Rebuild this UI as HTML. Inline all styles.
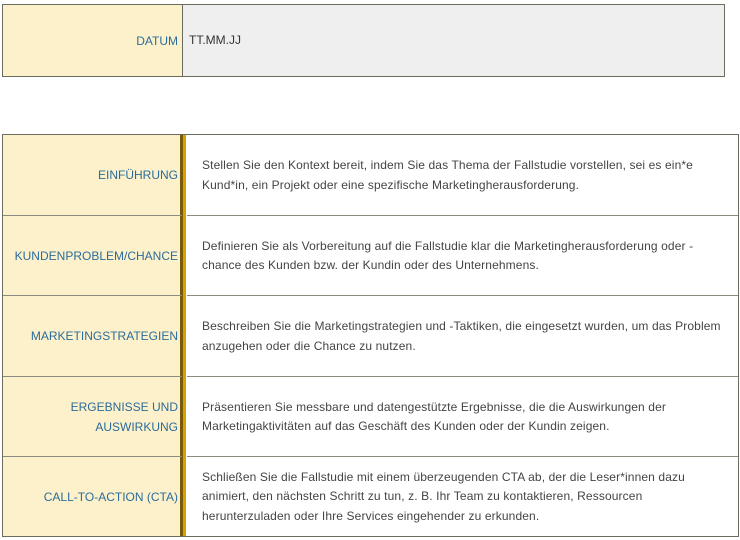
<!DOCTYPE html>
<html><head><meta charset="utf-8"><style>
body{margin:0;width:740px;height:540px;background:#fff;font-family:"Liberation Sans",sans-serif;font-size:12px;position:relative;overflow:hidden}
.box{position:absolute;border:1px solid #6b6b5e;box-sizing:border-box}
.lab{position:absolute;background:#fdf1cc;color:#2c6c99;text-align:right;display:flex;align-items:center;justify-content:flex-end;box-sizing:border-box;line-height:20px}
.txt{position:absolute;color:#444;line-height:19.5px;display:flex;align-items:center;box-sizing:border-box;letter-spacing:0.12px;padding-top:1px}
.hl{position:absolute;left:184px;right:0;height:1px;background:#8a8a80}
.hl2{position:absolute;left:0;width:179px;height:1px;background:#8a8a80}
</style></head><body>
<div class="box" style="left:2px;top:4px;width:723px;height:73px;background:#efefef">
 <div class="lab" style="left:0;top:0;width:180px;height:71px;padding-right:4px;border-right:1px solid #6b6b5e">DATUM</div>
 <div class="txt" style="left:186px;top:0;height:71px;color:#333;letter-spacing:0">TT.MM.JJ</div>
</div>
<div class="box" style="left:2px;top:134px;width:737px;height:403px">
 <div style="position:absolute;left:0;top:0;width:177px;height:401px;background:#fdf1cc"></div>
 <div style="position:absolute;left:177px;top:0;width:3px;height:401px;background:#7a5a0a"></div>
 <div style="position:absolute;left:180px;top:0;width:3px;height:401px;background:#d6a300"></div>
 <div class="hl" style="top:80px"></div><div class="hl2" style="top:80px"></div>
 <div class="hl" style="top:160px"></div><div class="hl2" style="top:160px"></div>
 <div class="hl" style="top:241px"></div><div class="hl2" style="top:241px"></div>
 <div class="hl" style="top:321px"></div><div class="hl2" style="top:321px"></div>

 <div class="lab" style="left:0;top:0;width:175px;height:80px;background:none">EINFÜHRUNG</div>
 <div class="lab" style="left:0;top:81px;width:175px;height:79px;background:none">KUNDENPROBLEM/CHANCE</div>
 <div class="lab" style="left:0;top:161px;width:175px;height:80px;background:none">MARKETINGSTRATEGIEN</div>
 <div class="lab" style="left:0;top:242px;width:175px;height:79px;background:none">ERGEBNISSE UND<br>AUSWIRKUNG</div>
 <div class="lab" style="left:0;top:322px;width:175px;height:79px;background:none">CALL-TO-ACTION (CTA)</div>

 <div class="txt" style="left:199px;top:0;width:500px;height:80px">Stellen Sie den Kontext bereit, indem Sie das Thema der Fallstudie vorstellen, sei es ein*e<br>Kund*in, ein Projekt oder eine spezifische Marketingherausforderung.</div>
 <div class="txt" style="left:199px;top:81px;width:520px;height:79px">Definieren Sie als Vorbereitung auf die Fallstudie klar die Marketingherausforderung oder -<br>chance des Kunden bzw. der Kundin oder des Unternehmens.</div>
 <div class="txt" style="left:199px;top:161px;width:535px;height:80px">Beschreiben Sie die Marketingstrategien und -Taktiken, die eingesetzt wurden, um das Problem<br>anzugehen oder die Chance zu nutzen.</div>
 <div class="txt" style="left:199px;top:242px;width:530px;height:79px">Präsentieren Sie messbare und datengestützte Ergebnisse, die die Auswirkungen der<br>Marketingaktivitäten auf das Geschäft des Kunden oder der Kundin zeigen.</div>
 <div class="txt" style="left:199px;top:322px;width:535px;height:79px">Schließen Sie die Fallstudie mit einem überzeugenden CTA ab, der die Leser*innen dazu<br>animiert, den nächsten Schritt zu tun, z. B. Ihr Team zu kontaktieren, Ressourcen<br>herunterzuladen oder Ihre Services eingehender zu erkunden.</div>
</div>
</body></html>
